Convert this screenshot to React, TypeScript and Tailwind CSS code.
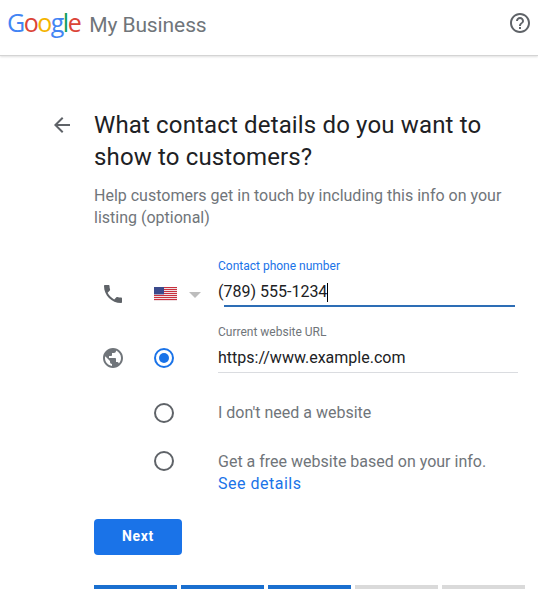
import React from 'react';

const Icon = ({ d, className }: { d: string; className: string }) => (
  <svg viewBox="0 0 24 24" className={className} fill="currentColor">
    <path d={d} />
  </svg>
);

const phonePath =
  'M6.62 10.79c1.44 2.83 3.76 5.14 6.59 6.59l2.2-2.2c.27-.27.67-.36 1.02-.24 1.12.37 2.33.57 3.57.57.55 0 1 .45 1 1V20c0 .55-.45 1-1 1-9.39 0-17-7.61-17-17 0-.55.45-1 1-1h3.5c.55 0 1 .45 1 1 0 1.25.2 2.45.57 3.57.11.35.03.74-.25 1.02l-2.2 2.2z';
const globePath =
  'M12 2C6.48 2 2 6.48 2 12s4.48 10 10 10 10-4.48 10-10S17.52 2 12 2zm-1 17.93c-3.95-.49-7-3.85-7-7.93 0-.62.08-1.21.21-1.79L9 15v1c0 1.1.9 2 2 2v1.93zm6.9-2.54c-.26-.81-1-1.39-1.9-1.39h-1v-3c0-.55-.45-1-1-1H8v-2h2c.55 0 1-.45 1-1V7h2c1.1 0 2-.9 2-2v-.41c2.93 1.19 5 4.06 5 7.41 0 2.08-.8 3.97-2.1 5.39z';
const helpPath =
  'M11 18h2v-2h-2v2zm1-16C6.48 2 2 6.48 2 12s4.48 10 10 10 10-4.48 10-10S17.52 2 12 2zm0 18c-4.41 0-8-3.59-8-8s3.59-8 8-8 8 3.59 8 8-3.59 8-8 8zm0-14c-2.21 0-4 1.79-4 4h2c0-1.1.9-2 2-2s2 .9 2 2c0 2-3 1.75-3 5h2c0-2.25 3-2.5 3-5 0-2.21-1.79-4-4-4z';
const backPath = 'M20 11H7.83l5.59-5.59L12 4l-8 8 8 8 1.41-1.41L7.83 13H20v-2z';

const Flag = () => (
  <svg viewBox="0 0 23 14" className="w-[23px] h-[14px]">
    <rect width="23" height="14" fill="#f4f4f6" />
    {[0, 2, 4, 6, 8, 10, 12].map((y) => (
      <rect key={y} y={y} width="23" height="1.1" fill="#c8313e" />
    ))}
    <rect width="10" height="7.4" fill="#3b4a8c" />
  </svg>
);

const Radio = ({ checked }: { checked?: boolean }) =>
  checked ? (
    <div className="w-5 h-5 rounded-full border-2 border-[#1a73e8] flex items-center justify-center">
      <div className="w-[10px] h-[10px] rounded-full bg-[#1a73e8]" />
    </div>
  ) : (
    <div className="w-5 h-5 rounded-full border-2 border-[#5f6368]" />
  );

export default function App() {
  const steps = [true, true, true, false, false];

  return (
    <div className="w-[538px] h-[608px] overflow-hidden bg-white font-['Roboto',sans-serif]">
      <header className="h-[56px] flex items-center justify-between pl-[7px] pr-[6px] pb-[9px] border-b border-[#d4d4d4] shadow-[0_1px_2px_rgba(0,0,0,0.12)]">
        <div className="flex items-baseline">
          <span className="font-['Open_Sans',sans-serif] text-[25px] leading-none tracking-[-1.5px]">
            <span className="text-[#4285f4]">G</span>
            <span className="text-[#db4437]">o</span>
            <span className="text-[#f4b400]">o</span>
            <span className="text-[#4285f4]">g</span>
            <span className="text-[#0f9d58]">l</span>
            <span className="text-[#db4437]">e</span>
          </span>
          <span className="ml-[9px] text-[21px] leading-none tracking-[-0.1px] text-[#70757a]">My Business</span>
        </div>
        <Icon d={helpPath} className="w-6 h-6 text-[#5f6368]" />
      </header>

      <main className="pt-[53px] pl-[50px]">
        <div className="flex">
          <Icon d={backPath} className="w-6 h-6 mt-[4px] mr-[20px] text-[#5f6368]" />
          <div>
            <h1 className="text-[24px] leading-[32px] text-[#202124] tracking-[0.15px] w-[420px]">
              What contact details do you want to show to customers?
            </h1>
            <p className="mt-[12px] text-[16px] leading-[22px] text-[#70757a] w-[420px]">
              Help customers get in touch by including this info on your listing (optional)
            </p>
          </div>
        </div>

        <div className="ml-[44px] mt-[27px] w-[424px]">
          {/* phone row */}
          <div className="flex h-[54px]">
            <div className="w-[60px] pt-[26px] pl-[7px]">
              <Icon d={phonePath} className="w-6 h-6 text-[#5f6368]" />
            </div>
            <div className="w-[64px] pt-[31px] flex items-start">
              <Flag />
              <div className="ml-[12px] mt-[5px] w-0 h-0 border-x-[6px] border-x-transparent border-t-[6px] border-t-[#bdbdbd]" />
            </div>
            <div className="flex-1">
              <div className="text-[12px] leading-[14px] text-[#1a73e8] mt-[3px]">Contact phone number</div>
              <div className="mt-[7px] h-[24px] text-[16px] leading-[24px] text-[#202124] flex items-center">
                (789) 555-1234
                <span className="w-px h-[19px] bg-black" />
              </div>
              <div className="ml-[6px] mr-[3px] mt-[1px] h-[2px] bg-[#2d6db5]" />
            </div>
          </div>

          {/* website row */}
          <div className="flex h-[65px] mt-[21px]">
            <div className="w-[60px] pt-[15px] pl-[7px]">
              <Icon d={globePath} className="w-6 h-6 text-[#70757a]" />
            </div>
            <div className="w-[64px] pt-[17px]">
              <Radio checked />
            </div>
            <div className="flex-1 -mt-[6px]">
              <div className="text-[12px] leading-[14px] text-[#70757a]">Current website URL</div>
              <div className="mt-[7px] h-[24px] text-[16px] leading-[24px] text-[#202124]">https://www.example.com</div>
              <div className="mt-[2px] h-px bg-[#dadce0]" />
            </div>
          </div>

          {/* no website */}
          <div className="flex items-center h-[24px] pl-[60px] mt-[5px]">
            <div className="w-[64px]">
              <Radio />
            </div>
            <span className="text-[16px] text-[#70757a]">I don't need a website</span>
          </div>

          {/* free website */}
          <div className="flex pl-[60px] mt-[26px]">
            <div className="w-[64px]">
              <Radio />
            </div>
            <div className="text-[16px] leading-[22px]">
              <div className="text-[#70757a]">Get a free website based on your info.</div>
              <div className="text-[#1a73e8] tracking-[0.5px]">See details</div>
            </div>
          </div>
        </div>

        <button className="block ml-[44px] mt-[24px] w-[88px] h-[36px] pb-[1px] rounded bg-[#1a73e8] text-white text-[14px] font-bold tracking-[0.7px]">
          Next
        </button>

        <div className="ml-[44px] mt-[30px] flex gap-[4px]">
          {steps.map((done, i) => (
            <div key={i} className={done ? 'w-[83px] h-[4px] bg-[#1a6fcf]' : 'w-[83px] h-[4px] bg-[#dadada]'} />
          ))}
        </div>
      </main>
    </div>
  );
}
